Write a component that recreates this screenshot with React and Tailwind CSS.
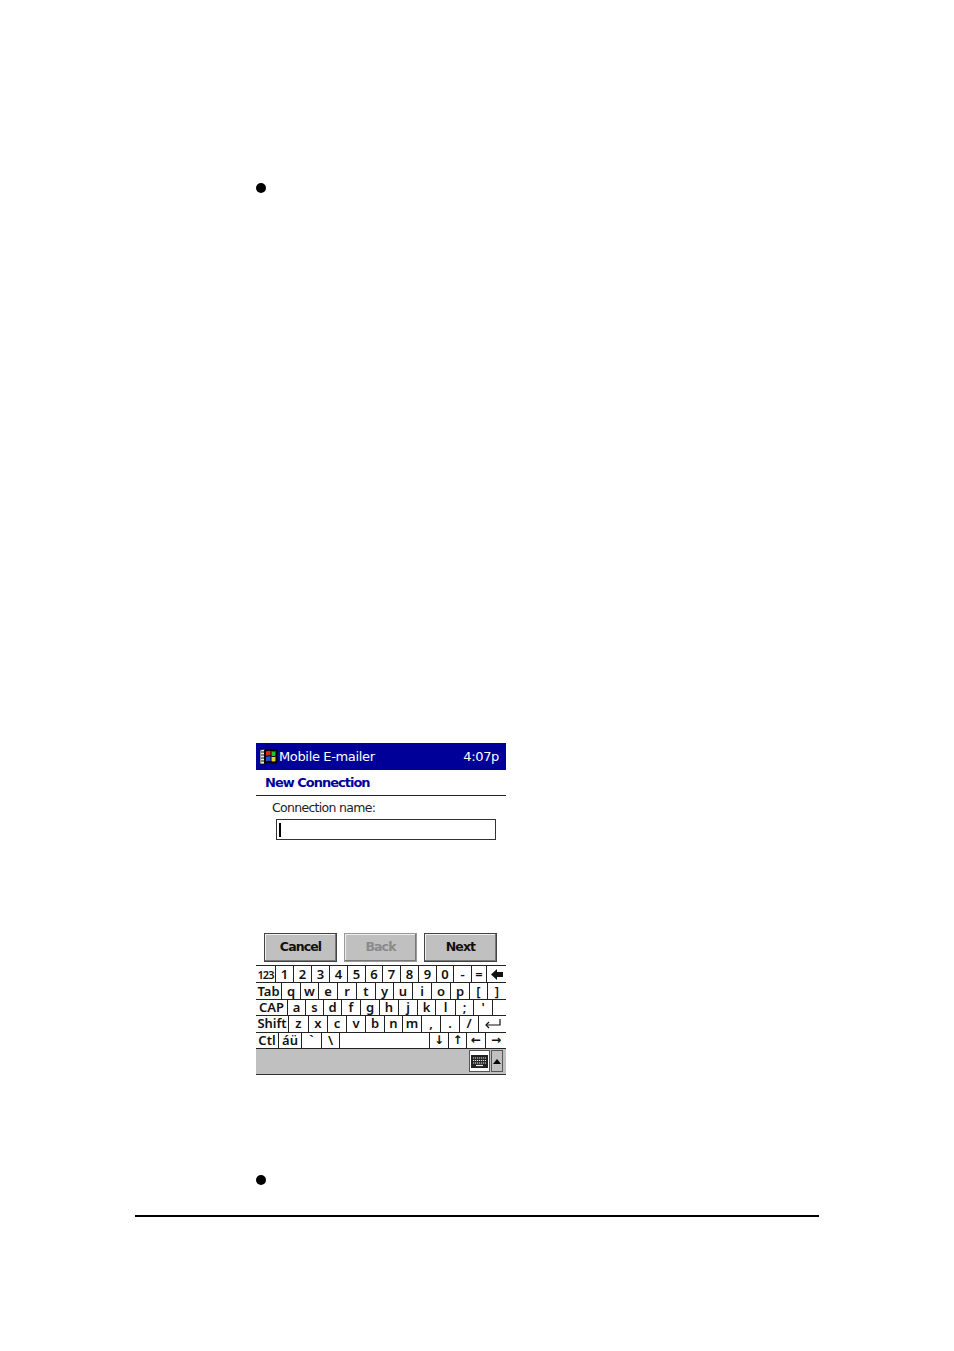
import React from 'react';

function BackArrow() {
  return (
    <svg width="12" height="11" viewBox="0 0 12 11">
      <path d="M0 5.5 L6 0 L6 3 L12 3 L12 8 L6 8 L6 11 Z" fill="#111" />
    </svg>
  );
}

function EnterArrow() {
  return (
    <svg width="17" height="10" viewBox="0 0 17 10" fill="none" stroke="#111" strokeWidth="1.2">
      <path d="M16 0 L16 6 L2 6" />
      <path d="M5 3 L2 6 L5 9" />
    </svg>
  );
}

const arrow = "text-[12px] font-['DejaVu_Sans',sans-serif]";

const rows = [
  [['123', 'w-[20px]', 'text-[11px] tracking-[-1px]'], ['1', 'w-[18px]'], ['2', 'w-[18px]'], ['3', 'w-[18px]'], ['4', 'w-[18px]'], ['5', 'w-[18px]'], ['6', 'w-[17px]'], ['7', 'w-[18px]'], ['8', 'w-[18px]'], ['9', 'w-[18px]'], ['0', 'w-[17px]'], ['-', 'w-[18px]'], ['=', 'w-[15px]'], [<BackArrow />, 'w-[19px]']],
  [['Tab', 'w-[26px]'], ['q', 'w-[19px]'], ['w', 'w-[18px]'], ['e', 'w-[19px]'], ['r', 'w-[19px]'], ['t', 'w-[19px]'], ['y', 'w-[18px]'], ['u', 'w-[19px]'], ['i', 'w-[19px]'], ['o', 'w-[19px]'], ['p', 'w-[19px]'], ['[', 'w-[18px]'], [']', 'w-[18px]']],
  [['CAP', 'w-[32px]'], ['a', 'w-[18px]'], ['s', 'w-[18px]'], ['d', 'w-[18px]'], ['f', 'w-[19px]'], ['g', 'w-[19px]'], ['h', 'w-[19px]'], ['j', 'w-[19px]'], ['k', 'w-[18px]'], ['l', 'w-[20px]'], [';', 'w-[18px]'], ["'", 'w-[19px]'], ['', 'w-[13px]']],
  [['Shift', 'w-[33px]'], ['z', 'w-[20px]'], ['x', 'w-[19px]'], ['c', 'w-[19px]'], ['v', 'w-[19px]'], ['b', 'w-[19px]'], ['n', 'w-[18px]'], ['m', 'w-[19px]'], [',', 'w-[19px]'], ['.', 'w-[19px]'], ['/', 'w-[19px]'], [<EnterArrow />, 'w-[27px]']],
  [['Ctl', 'w-[23px]'], ['áü', 'w-[23px]'], ['`', 'w-[20px]'], ['\\', 'w-[18px]'], ['', 'w-[90px]'], ['↓', 'w-[19px]', arrow], ['↑', 'w-[18px]', arrow], ['←', 'w-[19px]', arrow], ['→', 'w-[20px]', arrow]],
];

function Flag() {
  return (
    <svg width="18" height="17" viewBox="0 0 18 17" className="shrink-0">
      <path d="M0 2 L5 1 L5 16 L0 16 Z" fill="#e8e8e8" stroke="#111" strokeWidth="0.8" />
      <path d="M1 4h3M1 7h3M1 10h3M1 13h3" stroke="#111" strokeWidth="1" />
      <path d="M4 2 Q8 0 11 1 Q14 2 17.5 1 L17.5 15 Q14 16 11 15 Q8 14 4 16 Z" fill="#000" />
      <path d="M6 3.5 Q8 2.5 10.5 3 L10.5 7.5 Q8 7 6 8 Z" fill="#e02020" />
      <path d="M11.5 3 Q13.5 4 15.5 3 L15.5 7.5 Q13.5 8.5 11.5 7.5 Z" fill="#20c040" />
      <path d="M6 9 Q8 8 10.5 8.5 L10.5 13 Q8 12.5 6 13.5 Z" fill="#2050e0" />
      <path d="M11.5 8.5 Q13.5 9.5 15.5 8.5 L15.5 13 Q13.5 14 11.5 13 Z" fill="#f0d020" />
    </svg>
  );
}

function KeyboardIcon() {
  return (
    <svg width="17" height="13" viewBox="0 0 17 13">
      <rect x="0" y="0" width="17" height="13" fill="#222" />
      <path d="M2 3h13M2 5.5h13M2 8h13" stroke="#eee" strokeWidth="1.2" strokeDasharray="1.2 0.8" />
      <path d="M5 10.5h7" stroke="#eee" strokeWidth="1.2" />
    </svg>
  );
}

function WizardButton({ label, width, disabled }) {
  return (
    <div className={`${width} h-[29px] flex items-center justify-center bg-[#c0c0c0] border border-[#444] shadow-[inset_-1px_-1px_0_#777,inset_1px_1px_0_#eee] text-[12.5px] font-bold tracking-[-0.9px] ${disabled ? 'text-[#8a8a8a] border-[#999]' : 'text-[#111]'}`}>
      {label}
    </div>
  );
}

export default function App() {
  return (
    <div className="w-[954px] h-[1351px] bg-white pt-[183px] font-['DejaVu_Sans',sans-serif]">
      <div className="ml-[256px] w-[10px] h-[10px] rounded-full bg-black" />

      <div className="ml-[256px] mt-[550px] w-[250px] flex flex-col">
        <div className="h-[27px] bg-[#000099] text-white flex items-center justify-between pl-[4px] pr-[7px] text-[13px] tracking-[-0.35px]">
          <div className="flex items-center gap-[1px]">
            <Flag />
            <span>Mobile E-mailer</span>
          </div>
          <span>4:07p</span>
        </div>

        <div className="h-[26px] border-b border-[#222] flex items-center pl-[9px] text-[13px] font-bold tracking-[-1px] text-[#000099]">
          New Connection
        </div>

        <div className="h-[137px] pl-[16px] pt-[5px]">
          <div className="text-[12.5px] leading-[14px] tracking-[-0.7px] text-[#222]">Connection name:</div>
          <div className="mt-[4px] ml-[4px] w-[220px] h-[21px] border border-[#333] flex items-center pl-[2px]">
            <div className="w-[2px] h-[14px] bg-black" />
          </div>
        </div>

        <div className="h-[32px] flex pl-[8px] gap-[7px]">
          <WizardButton label="Cancel" width="w-[73px]" />
          <WizardButton label="Back" width="w-[73px]" disabled />
          <WizardButton label="Next" width="w-[73px]" />
        </div>

        <div className="border-t border-[#222] border-b text-[13px] text-[#111] font-['Noto_Sans',sans-serif]">
          {rows.map((row, i) => (
            <div key={i} className={`flex h-[16.4px] ${i > 0 ? 'border-t border-[#222]' : ''}`}>
              {row.map(([label, width, extra], j) => (
                <div key={j} className={`${width} ${extra || ''} shrink-0 flex items-center justify-center leading-none font-semibold ${j < row.length - 1 ? 'border-r border-[#222]' : ''}`}>
                  {label}
                </div>
              ))}
            </div>
          ))}
        </div>

        <div className="h-[26px] bg-[#c0c0c0] border-b border-[#333] flex justify-end items-center pr-[3px] gap-[1px]">
          <div className="w-[21px] h-[22px] bg-white border border-[#555] flex items-center justify-center">
            <KeyboardIcon />
          </div>
          <div className="w-[12px] h-[22px] border border-[#555] flex items-center justify-center">
            <div className="w-0 h-0 border-x-[4px] border-x-transparent border-b-[5px] border-b-black" />
          </div>
        </div>
      </div>

      <div className="ml-[256px] mt-[100px] w-[10px] h-[10px] rounded-full bg-black" />
      <div className="ml-[135px] mt-[30px] w-[684px] h-[2px] bg-black" />
    </div>
  );
}
